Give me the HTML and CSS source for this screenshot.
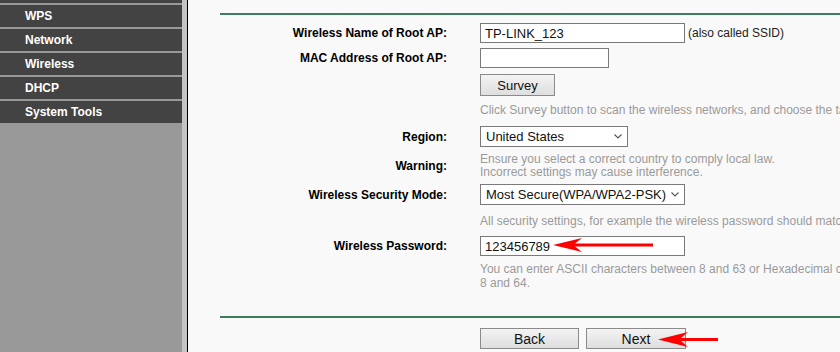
FILE: index.html
```html
<!DOCTYPE html>
<html lang="en">
<head>
<meta charset="utf-8">
<title>Quick Setup - Wireless</title>
<link rel="stylesheet" href="styles.css">
</head>
<body>
<div class="page">
  <aside class="sidebar">
    <ul class="menu">
      <li class="menu-item">Quick Setup</li>
      <li class="menu-item">WPS</li>
      <li class="menu-item">Network</li>
      <li class="menu-item">Wireless</li>
      <li class="menu-item">DHCP</li>
      <li class="menu-item">System Tools</li>
    </ul>
  </aside>
  <div class="edge"></div>
  <main class="content">
    <div class="rule"></div>
    <div class="form">
      <div class="row row-first">
        <div class="label">Wireless Name of Root AP:</div>
        <input class="text-input wide" type="text" value="TP-LINK_123">
        <span class="note">(also called SSID)</span>
      </div>
      <div class="row row-mac">
        <div class="label">MAC Address of Root AP:</div>
        <input class="text-input narrow" type="text" value="">
      </div>
      <div class="row row-survey">
        <div class="label"></div>
        <button class="btn btn-survey" type="button">Survey</button>
      </div>
      <div class="row row-help1">
        <div class="label"></div>
        <div class="help">Click Survey button to scan the wireless networks, and choose the target one.</div>
      </div>
      <div class="row row-region">
        <div class="label">Region:</div>
        <div class="select select-region">
          <span class="select-text">United States</span>
          <svg class="chevron" width="8" height="5" viewBox="0 0 8 5"><path d="M0.5 0.5 L4 4 L7.5 0.5" fill="none" stroke="#555" stroke-width="1.1"/></svg>
        </div>
      </div>
      <div class="row row-warning">
        <div class="label">Warning:</div>
        <div class="help help-2">Ensure you select a correct country to comply local law.<br>Incorrect settings may cause interference.</div>
      </div>
      <div class="row row-mode">
        <div class="label">Wireless Security Mode:</div>
        <div class="select select-mode">
          <span class="select-text">Most Secure(WPA/WPA2-PSK)</span>
          <svg class="chevron" width="8" height="5" viewBox="0 0 8 5"><path d="M0.5 0.5 L4 4 L7.5 0.5" fill="none" stroke="#555" stroke-width="1.1"/></svg>
        </div>
      </div>
      <div class="row row-help3">
        <div class="label"></div>
        <div class="help">All security settings, for example the wireless password should match the root AP.</div>
      </div>
      <div class="row row-pass">
        <div class="label">Wireless Password:</div>
        <input class="text-input wide" type="text" value="123456789">
      </div>
      <div class="row row-help4">
        <div class="label"></div>
        <div class="help help-2b">You can enter ASCII characters between 8 and 63 or Hexadecimal characters between<br>8 and 64.</div>
      </div>
    </div>
    <div class="rule rule-bottom"></div>
    <div class="row row-buttons">
      <div class="label"></div>
      <div class="buttons">
        <button class="btn btn-back" type="button">Back</button>
        <button class="btn btn-next" type="button">Next</button>
      </div>
    </div>
    <svg class="arrow arrow-pass" width="100" height="14" viewBox="0 0 100 14">
      <polygon points="0,7 29,0 22,5.5 100,5.5 100,8.5 22,8.5 29,14" fill="#f00"/>
    </svg>
    <svg class="arrow arrow-next" width="60" height="15" viewBox="0 0 60 15">
      <polygon points="0,7.5 30,0 23,6 60,6 60,9 23,9 30,15" fill="#f00"/>
    </svg>
  </main>
</div>
</body>
</html>
```
FILE: styles.css
```css
* { box-sizing: border-box; }
html, body {
  margin: 0;
  padding: 0;
  height: 100%;
  overflow: hidden;
}
body {
  font-family: "Liberation Sans", Arial, sans-serif;
  font-size: 12px;
  color: #000;
  background: #f9f9f9;
}
.page {
  display: flex;
  height: 352px;
  width: 840px;
  overflow: hidden;
}
.sidebar {
  flex: 0 0 182px;
  background: #999;
  overflow: hidden;
}
.menu {
  list-style: none;
  margin: -19px 0 0 0;
  padding: 0;
  display: flex;
  flex-direction: column;
  gap: 2px;
}
.menu-item {
  height: 22px;
  line-height: 22px;
  padding-left: 25px;
  background: #434343;
  color: #fff;
  font-weight: bold;
  font-size: 12px;
  white-space: nowrap;
}
.edge {
  flex: 0 0 6px;
  background: #c4c4c4;
  border-right: 1px solid #000;
}
.content {
  position: relative;
  flex: 1 1 auto;
  min-width: 0;
  background: #f9f9f9;
  padding: 13px 0 0 32px;
  overflow: hidden;
}
.rule {
  height: 2px;
  background: #3d7d5c;
  margin-right: -40px;
}
.rule-bottom { margin-top: 26px; }
.form { padding-top: 8px; }
.row {
  display: flex;
  align-items: center;
  white-space: nowrap;
}
.label {
  flex: 0 0 227px;
  margin-right: 33px;
  text-align: right;
  font-weight: bold;
  font-size: 12px;
}
.row-first { height: 20px; }
.row-mac { height: 20px; margin-top: 5px; }
.row-survey { height: 22px; margin-top: 6px; }
.row-help1 { height: 14px; margin-top: 7px; }
.row-region { height: 21px; margin-top: 9px; }
.row-warning { height: 26px; margin-top: 6px; }
.row-mode { height: 21px; margin-top: 5px; }
.row-help3 { height: 14px; margin-top: 9px; }
.row-pass { height: 20px; margin-top: 8px; }
.row-help4 { height: 28px; margin-top: 6px; }
.row-buttons { height: 21px; margin-top: 10px; }

.text-input {
  height: 20px;
  border: 1px solid #7a7a7a;
  background: #fff;
  padding: 0 4px;
  font-family: "Liberation Sans", Arial, sans-serif;
  font-size: 13px;
  color: #111;
  outline: none;
  margin: 0;
}
.wide { width: 205px; }
.narrow { width: 129px; }
.note {
  margin-left: 3px;
  font-size: 12px;
  color: #222;
}
.help {
  font-size: 12px;
  line-height: 14px;
  color: #9a9a9a;
}
.help-2 { line-height: 13px; }
.help-2b { line-height: 14px; }

.select {
  display: flex;
  align-items: center;
  height: 21px;
  border: 1px solid #7a7a7a;
  background: #fff;
  padding: 0 5px;
  font-size: 13px;
  color: #111;
}
.select-region { width: 148px; }
.select-mode { width: 205px; }
.select-text {
  flex: 1 1 auto;
  min-width: 0;
  overflow: hidden;
  white-space: nowrap;
}
.chevron {
  flex: 0 0 8px;
  margin-left: 3px;
}

.btn {
  margin: 0;
  padding: 0;
  border: 1px solid #8a8a8a;
  border-radius: 0;
  background: linear-gradient(#f3f3f3, #dedede);
  font-family: "Liberation Sans", Arial, sans-serif;
  color: #111;
}
.btn-survey {
  width: 75px;
  height: 22px;
  font-size: 13px;
}
.buttons {
  display: flex;
  gap: 7px;
}
.btn-back {
  width: 99px;
  height: 21px;
  font-size: 14px;
}
.btn-next {
  width: 100px;
  height: 21px;
  font-size: 14px;
}
.arrow {
  position: absolute;
  display: block;
}
.arrow-pass { left: 365px; top: 238px; }
.arrow-next { left: 470px; top: 332px; }
```
